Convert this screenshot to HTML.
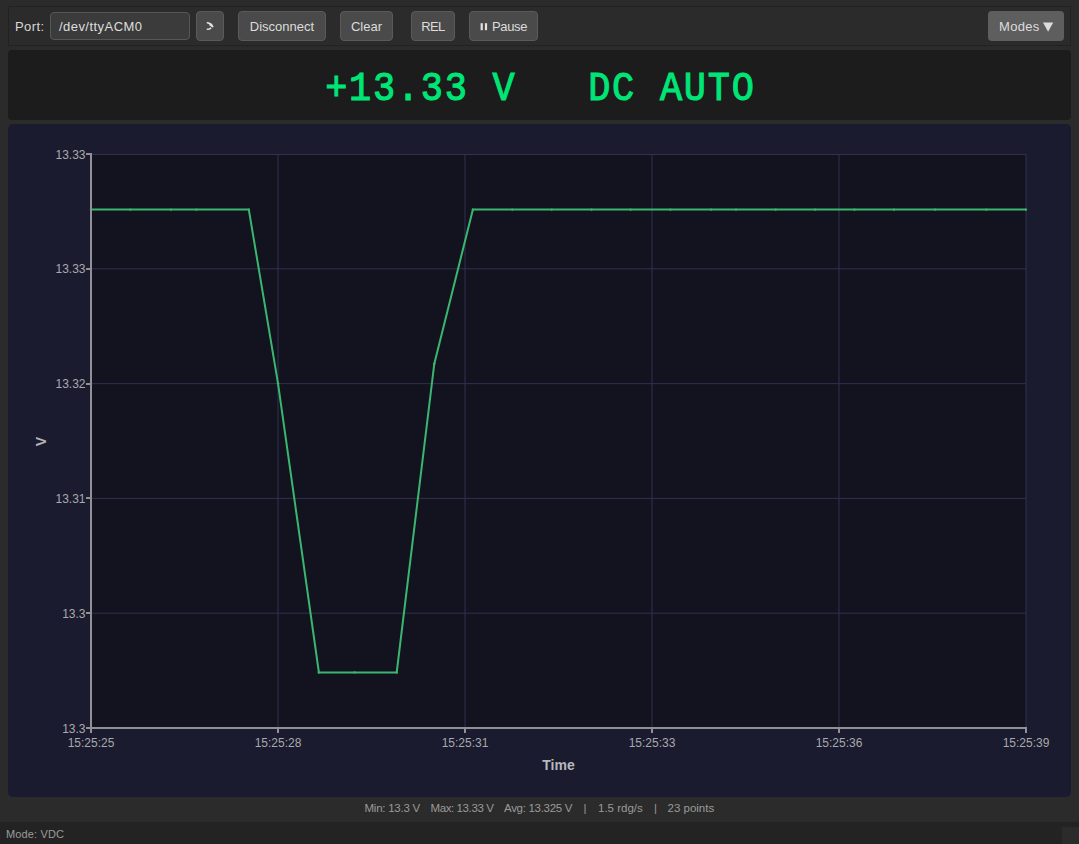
<!DOCTYPE html>
<html><head><meta charset="utf-8">
<style>
*{margin:0;padding:0;box-sizing:border-box}
html,body{width:1079px;height:844px;overflow:hidden;background:#2b2b2b;font-family:"Liberation Sans",sans-serif;color:#dcdcdc}
.a{position:absolute}
.tb{left:8px;top:6px;width:1063px;height:40px;background:#2b2b2b;border:1px solid #222222}
.lbl{font-size:13px;line-height:16px;color:#d8d8d8}
.inp{left:50px;top:12px;width:140px;height:28px;background:#3b3b3b;border:1px solid #575757;border-radius:4px;font-size:13px;line-height:28px;padding-left:8px;color:#dedede;letter-spacing:0.45px}
.btn{top:11px;height:30px;background:#4a4a4a;border:1px solid #5a5a5a;border-radius:4px;font-size:13px;line-height:30px;text-align:center;color:#dcdcdc}
.modes{background:#5e5e5e;border:none;line-height:31px}
.disp{left:8px;top:50px;width:1063px;height:70px;background:#1c1c1c;border-radius:4px}
.dtxt{left:0;top:54px;width:1079px;height:70px;text-align:center;font-family:"Liberation Mono",monospace;font-size:41px;line-height:70px;color:#00e676;white-space:pre;-webkit-text-stroke:1.1px #00e676;letter-spacing:1.96px;text-indent:1.96px;transform:scaleX(0.9);transform-origin:539.5px 35px}
.chart{left:8px;top:124px;width:1063px;height:673px;background:#1a1b2e;border-radius:5px}
.stats{top:801px;font-size:11.5px;line-height:14px;color:#9a9a9a;white-space:pre}
.sbar{left:0;top:822px;width:1079px;height:22px;background:#232323}
.mode{left:6px;top:827px;font-size:11px;line-height:14px;color:#9c9c9c;letter-spacing:0.15px}
.grip{left:1062px;top:827px;width:17px;height:17px;background:#2b2b2b}
svg text{font-family:"Liberation Sans",sans-serif}
.tl{font-size:12px;fill:#a9a9ad}
.tt{font-size:14px;font-weight:bold;fill:#b9b9bd}
.tt2{font-size:14px;font-weight:bold;fill:#b3b3b7}
</style></head><body>
<div class="a tb"></div>
<div class="a lbl" style="left:15px;top:19px;letter-spacing:0.4px">Port:</div>
<div class="a inp">/dev/ttyACM0</div>
<div class="a btn" style="left:196px;width:28px">
<svg width="26" height="28" viewBox="0 0 26 28" style="position:absolute;left:0;top:0"><path d="M10.4 10.8 Q14.2 11.2 15.4 14.2 M15.8 14.6 L12.9 12.8 M13.6 16.2 Q12.6 17.3 10.4 17.3" fill="none" stroke="#e6e6e6" stroke-width="1.6" stroke-linecap="round"/></svg>
</div>
<div class="a btn" style="left:238px;width:88px">Disconnect</div>
<div class="a btn" style="left:340px;width:53px">Clear</div>
<div class="a btn" style="left:411px;width:44px;letter-spacing:-0.6px">REL</div>
<div class="a btn" style="left:469px;width:69px"><svg width="69" height="30" style="position:absolute;left:-1px;top:-1px"><rect x="11.6" y="12.2" width="2.2" height="7" fill="#e2e2e2"/><rect x="15.9" y="12.2" width="2.2" height="7" fill="#e2e2e2"/></svg><span style="position:absolute;left:22px;top:0;letter-spacing:-0.35px">Pause</span></div>
<div class="a btn modes" style="left:988px;width:76px"><span style="position:absolute;left:11px;top:0;letter-spacing:0.3px">Modes</span><svg width="76" height="30" style="position:absolute;left:0;top:0"><polygon points="55,11.5 65.2,11.5 60.1,20.8" fill="#dcdcdc"/></svg></div>

<div class="a disp"></div>
<div class="a dtxt">+13.33 V   DC AUTO</div>

<div class="a chart"></div>
<svg class="a" style="left:0;top:0" width="1079" height="844" viewBox="0 0 1079 844">
<rect x="92" y="154" width="934" height="573" fill="#131320"/>
<line x1="92" y1="154.5" x2="1026" y2="154.5" stroke="#30304f" stroke-width="1"/>
<line x1="92" y1="268.8" x2="1026" y2="268.8" stroke="#30304f" stroke-width="1"/>
<line x1="92" y1="383.6" x2="1026" y2="383.6" stroke="#30304f" stroke-width="1"/>
<line x1="92" y1="498.4" x2="1026" y2="498.4" stroke="#30304f" stroke-width="1"/>
<line x1="92" y1="613.2" x2="1026" y2="613.2" stroke="#30304f" stroke-width="1"/>
<line x1="278" y1="154" x2="278" y2="727" stroke="#30304f" stroke-width="1"/>
<line x1="465" y1="154" x2="465" y2="727" stroke="#30304f" stroke-width="1"/>
<line x1="652" y1="154" x2="652" y2="727" stroke="#30304f" stroke-width="1"/>
<line x1="839" y1="154" x2="839" y2="727" stroke="#30304f" stroke-width="1"/>
<line x1="1026" y1="154" x2="1026" y2="727" stroke="#30304f" stroke-width="1"/>
<polyline points="91,209.6 130.4,209.6 170.9,209.6 196.3,209.6 248.8,209.6 278,383.3 318.9,672.4 354.6,672.4 396.7,672.4 434.3,363.7 472.9,209.6 512.3,209.6 551.7,209.6 591.5,209.6 630.7,209.6 670.5,209.6 711,209.6 736,209.6 775.6,209.6 815,209.6 854.5,209.6 894,209.6 935,209.6 986.3,209.6 1026,209.6" fill="none" stroke="#3bb66f" stroke-width="2" stroke-linejoin="miter"/>
<circle cx="91" cy="209.6" r="1.2" fill="#3bb66f"/>
<circle cx="130.4" cy="209.6" r="1.2" fill="#3bb66f"/>
<circle cx="170.9" cy="209.6" r="1.2" fill="#3bb66f"/>
<circle cx="196.3" cy="209.6" r="1.2" fill="#3bb66f"/>
<circle cx="248.8" cy="209.6" r="1.2" fill="#3bb66f"/><circle cx="278" cy="383.3" r="1.2" fill="#3bb66f"/>
<circle cx="318.8" cy="672.4" r="1.2" fill="#3bb66f"/>
<circle cx="354.6" cy="672.4" r="1.2" fill="#3bb66f"/>
<circle cx="396.7" cy="672.4" r="1.2" fill="#3bb66f"/>
<circle cx="434.3" cy="363.7" r="1.2" fill="#3bb66f"/>
<circle cx="472.9" cy="209.6" r="1.2" fill="#3bb66f"/>
<circle cx="512.3" cy="209.6" r="1.2" fill="#3bb66f"/>
<circle cx="551.7" cy="209.6" r="1.2" fill="#3bb66f"/>
<circle cx="591.5" cy="209.6" r="1.2" fill="#3bb66f"/>
<circle cx="630.7" cy="209.6" r="1.2" fill="#3bb66f"/>
<circle cx="670.5" cy="209.6" r="1.2" fill="#3bb66f"/>
<circle cx="711" cy="209.6" r="1.2" fill="#3bb66f"/>
<circle cx="736" cy="209.6" r="1.2" fill="#3bb66f"/>
<circle cx="775.6" cy="209.6" r="1.2" fill="#3bb66f"/>
<circle cx="815" cy="209.6" r="1.2" fill="#3bb66f"/>
<circle cx="854.5" cy="209.6" r="1.2" fill="#3bb66f"/>
<circle cx="894" cy="209.6" r="1.2" fill="#3bb66f"/>
<circle cx="935" cy="209.6" r="1.2" fill="#3bb66f"/>
<circle cx="986.3" cy="209.6" r="1.2" fill="#3bb66f"/>
<circle cx="1026" cy="209.6" r="1.2" fill="#3bb66f"/>
<rect x="90" y="153" width="2" height="580" fill="#909096"/>
<rect x="90" y="727" width="937" height="2" fill="#909096"/>
<rect x="86" y="153" width="5" height="2" fill="#909096"/>
<rect x="86" y="268" width="5" height="2" fill="#909096"/>
<rect x="86" y="383" width="5" height="2" fill="#909096"/>
<rect x="86" y="497" width="5" height="2" fill="#909096"/>
<rect x="86" y="612" width="5" height="2" fill="#909096"/>
<rect x="86" y="727" width="5" height="2" fill="#909096"/>
<rect x="277" y="727" width="2" height="6" fill="#909096"/>
<rect x="464" y="727" width="2" height="6" fill="#909096"/>
<rect x="651" y="727" width="2" height="6" fill="#909096"/>
<rect x="838" y="727" width="2" height="6" fill="#909096"/>
<rect x="1025" y="727" width="2" height="6" fill="#909096"/>
<text x="85.5" y="158.5" text-anchor="end" class="tl">13.33</text>
<text x="85.5" y="273.3" text-anchor="end" class="tl">13.33</text>
<text x="85.5" y="388.1" text-anchor="end" class="tl">13.32</text>
<text x="85.5" y="502.9" text-anchor="end" class="tl">13.31</text>
<text x="85.5" y="617.7" text-anchor="end" class="tl">13.3</text>
<text x="85.5" y="732.5" text-anchor="end" class="tl">13.3</text>
<text x="91" y="747" text-anchor="middle" class="tl">15:25:25</text>
<text x="278" y="747" text-anchor="middle" class="tl">15:25:28</text>
<text x="465" y="747" text-anchor="middle" class="tl">15:25:31</text>
<text x="652" y="747" text-anchor="middle" class="tl">15:25:33</text>
<text x="839" y="747" text-anchor="middle" class="tl">15:25:36</text>
<text x="1026" y="747" text-anchor="middle" class="tl">15:25:39</text>
<text x="558.5" y="770" text-anchor="middle" class="tt">Time</text>
<text x="0" y="0" text-anchor="middle" class="tt2" transform="translate(45.5 441.7) rotate(-90)">V</text>
</svg>

<div class="a stats" id="s0" style="left:364.5px;letter-spacing:-0.25px">Min: 13.3 V</div><div class="a stats" id="s1" style="left:430.5px;letter-spacing:-0.4px">Max: 13.33 V</div><div class="a stats" id="s2" style="left:504px;letter-spacing:-0.3px">Avg: 13.325 V</div><div class="a stats" id="s3" style="left:583.5px">|</div><div class="a stats" id="s4" style="left:598px">1.5 rdg/s</div><div class="a stats" id="s5" style="left:654px">|</div><div class="a stats" id="s6" style="left:667.5px">23 points</div>
<div class="a sbar"></div>
<div class="a mode">Mode: VDC</div>
<div class="a grip"></div>
</body></html>
